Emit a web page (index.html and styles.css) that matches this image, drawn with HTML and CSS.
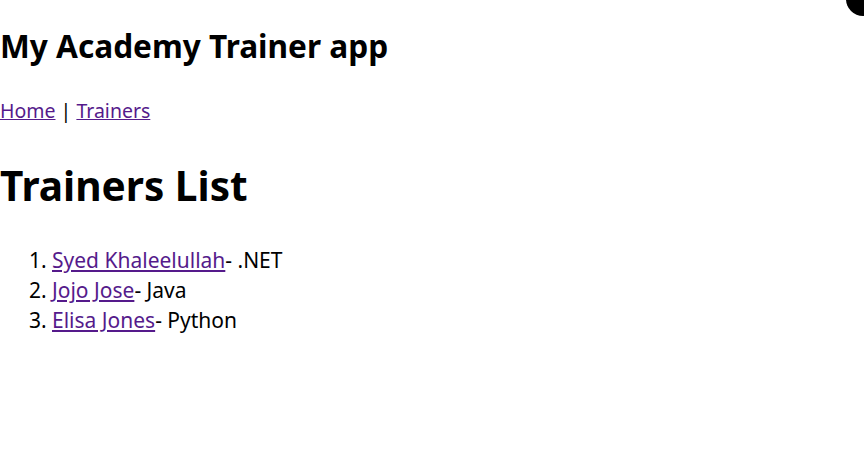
FILE: index.html
```html
<!DOCTYPE html>
<html>
<head>
<meta charset="utf-8">
<link rel="stylesheet" href="styles.css">
</head>
<body>
<div class="dot"></div>
<h2 class="app-title">My Academy Trainer app</h2>
<nav class="nav"><a href="#">Home</a> | <a href="#">Trainers</a></nav>
<h1 class="page-title">Trainers List</h1>
<ol class="trainers">
<li><a href="#">Syed Khaleelullah</a>- .NET</li>
<li><a href="#">Jojo Jose</a>- Java</li>
<li><a href="#">Elisa Jones</a>- Python</li>
</ol>
</body>
</html>
```
FILE: styles.css
```css
body {
  margin: 0;
  font-family: "Noto Sans", sans-serif;
  font-size: 20px;
  line-height: 30px;
  color: #000;
  background: #fff;
}
a { color: #551a8b; }
.dot {
  position: absolute;
  top: -18px;
  right: -16px;
  width: 34px;
  height: 34px;
  border-radius: 50%;
  background: #000;
}
.app-title {
  font-size: 31.6px;
  line-height: 40px;
  margin: 26px 0 0;
}
.nav {
  margin-top: 30px;
  font-size: 19.5px;
}
.page-title {
  font-size: 40.6px;
  line-height: 52px;
  margin: 34px 0 0;
}
.trainers {
  margin: 33px 0 0;
  padding-left: 52px;
  font-size: 21px;
}
```
